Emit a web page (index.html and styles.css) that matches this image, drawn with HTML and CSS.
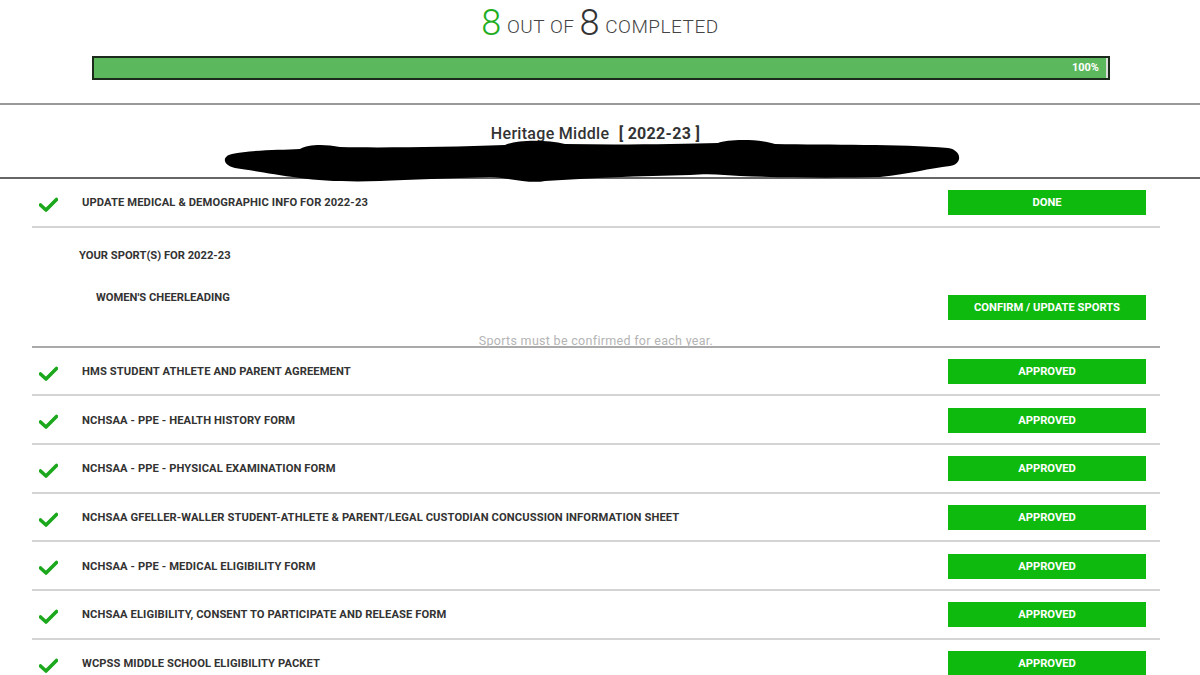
FILE: index.html
```html
<!DOCTYPE html>
<html>
<head>
    <meta charset="UTF-8">
    <title>Athlete Registration</title>
    <link rel="stylesheet" href="styles.css">
</head>
<body>
    <!-- summary header -->
    <div class="summary">
        <div class="count">
            <span class="num done">8</span> OUT OF <span class="num">8</span> COMPLETED
        </div>
        <div class="progress">
            <div class="progress-fill">100%</div>
        </div>
    </div>

    <div class="school">
        <h2 class="school-title">Heritage Middle <b>[ 2022-23 ]</b></h2>
        <svg class="redact" width="740" height="50" viewBox="225 140 740 50">
            <path d="M232 156 C250 152 280 152 300 151 C308 146 325 146 340 149 C380 150 450 149 505 147 C515 142 545 141 565 146 C620 147 680 146 718 145 C728 141 760 141 775 146 C830 147 900 146 948 150 C962 152 963 166 950 168 C930 170 910 176 880 179 C840 180 790 180 740 178 C725 177 710 175 690 177 C640 178 590 180 545 183 C530 186 510 180 490 179 C450 180 410 182 380 183 C350 184 320 183 300 180 C270 176 250 172 235 170 C222 167 222 158 232 156 Z" fill="#000"/>
        </svg>
    </div>

    <div class="tasks">
        <div class="task">
            <span class="check"><svg width="19" height="15" viewBox="0 0 19 15"><path d="M1.5 8 L7 13 L17.5 2.5" fill="none" stroke="#1ca81c" stroke-width="3.6" stroke-linecap="round" stroke-linejoin="round"/></svg></span>
            <span class="task-name">UPDATE MEDICAL &amp; DEMOGRAPHIC INFO FOR 2022-23</span>
            <a class="btn" href="#">DONE</a>
        </div>

        <div class="sports">
            <div class="sports-title">YOUR SPORT(S) FOR 2022-23</div>
            <div class="sports-row">
                <span class="sport">WOMEN'S CHEERLEADING</span>
                <a class="btn" href="#">CONFIRM / UPDATE SPORTS</a>
            </div>
            <div class="sports-note">Sports must be confirmed for each year.</div>
        </div>

        <div class="task">
            <span class="check"><svg width="19" height="15" viewBox="0 0 19 15"><path d="M1.5 8 L7 13 L17.5 2.5" fill="none" stroke="#1ca81c" stroke-width="3.6" stroke-linecap="round" stroke-linejoin="round"/></svg></span>
            <span class="task-name">HMS STUDENT ATHLETE AND PARENT AGREEMENT</span>
            <a class="btn" href="#">APPROVED</a>
        </div>
        <div class="task">
            <span class="check"><svg width="19" height="15" viewBox="0 0 19 15"><path d="M1.5 8 L7 13 L17.5 2.5" fill="none" stroke="#1ca81c" stroke-width="3.6" stroke-linecap="round" stroke-linejoin="round"/></svg></span>
            <span class="task-name">NCHSAA - PPE - HEALTH HISTORY FORM</span>
            <a class="btn" href="#">APPROVED</a>
        </div>
        <div class="task">
            <span class="check"><svg width="19" height="15" viewBox="0 0 19 15"><path d="M1.5 8 L7 13 L17.5 2.5" fill="none" stroke="#1ca81c" stroke-width="3.6" stroke-linecap="round" stroke-linejoin="round"/></svg></span>
            <span class="task-name">NCHSAA - PPE - PHYSICAL EXAMINATION FORM</span>
            <a class="btn" href="#">APPROVED</a>
        </div>
        <div class="task">
            <span class="check"><svg width="19" height="15" viewBox="0 0 19 15"><path d="M1.5 8 L7 13 L17.5 2.5" fill="none" stroke="#1ca81c" stroke-width="3.6" stroke-linecap="round" stroke-linejoin="round"/></svg></span>
            <span class="task-name">NCHSAA GFELLER-WALLER STUDENT-ATHLETE &amp; PARENT/LEGAL CUSTODIAN CONCUSSION INFORMATION SHEET</span>
            <a class="btn" href="#">APPROVED</a>
        </div>
        <div class="task">
            <span class="check"><svg width="19" height="15" viewBox="0 0 19 15"><path d="M1.5 8 L7 13 L17.5 2.5" fill="none" stroke="#1ca81c" stroke-width="3.6" stroke-linecap="round" stroke-linejoin="round"/></svg></span>
            <span class="task-name">NCHSAA - PPE - MEDICAL ELIGIBILITY FORM</span>
            <a class="btn" href="#">APPROVED</a>
        </div>
        <div class="task">
            <span class="check"><svg width="19" height="15" viewBox="0 0 19 15"><path d="M1.5 8 L7 13 L17.5 2.5" fill="none" stroke="#1ca81c" stroke-width="3.6" stroke-linecap="round" stroke-linejoin="round"/></svg></span>
            <span class="task-name">NCHSAA ELIGIBILITY, CONSENT TO PARTICIPATE AND RELEASE FORM</span>
            <a class="btn" href="#">APPROVED</a>
        </div>
        <div class="task">
            <span class="check"><svg width="19" height="15" viewBox="0 0 19 15"><path d="M1.5 8 L7 13 L17.5 2.5" fill="none" stroke="#1ca81c" stroke-width="3.6" stroke-linecap="round" stroke-linejoin="round"/></svg></span>
            <span class="task-name">WCPSS MIDDLE SCHOOL ELIGIBILITY PACKET</span>
            <a class="btn" href="#">APPROVED</a>
        </div>
    </div>
</body>
</html>
```

FILE: styles.css
```css
/* base */
body {
  margin: 0;
  background: #fff;
  color: #333;
  font-family: Roboto, "Liberation Sans", sans-serif;
}

/* summary header */
.summary {
  height: 105px;
  border-bottom: 2px solid #999;
  box-sizing: border-box;
  padding-top: 3px;
}

.count {
  text-align: center;
  font-size: 19px;
  font-weight: 300;
  color: #444;
  line-height: 40px;
  letter-spacing: 0.5px;
}

.num {
  font-size: 36px;
  font-weight: 300;
  color: #333;
  vertical-align: -2px;
}

.num.done {
  color: #1fae1f;
}

.progress {
  margin: 9px 90px 0 92px;
  height: 24px;
  border: 2px solid #1c2a1c;
  box-sizing: border-box;
  background: #e8e8e8;
}

.progress-fill {
  width: 100%;
  height: 100%;
  background: #5cb85c;
  color: #fff;
  font-weight: bold;
  font-size: 11px;
  line-height: 20px;
  text-align: right;
  padding-right: 7px;
  box-sizing: border-box;
  border-right: 2px solid #ddd;
}

/* school block */
.school {
  height: 74px;
  border-bottom: 2px solid #666;
  box-sizing: border-box;
  padding-top: 19px;
}

.school-title {
  margin: 0;
  text-align: center;
  font-size: 16px;
  font-weight: 500;
  letter-spacing: 0.3px;
  line-height: 20px;
  color: #333;
  padding-right: 9px;
}

.school-title b {
  margin-left: 5px;
  font-weight: bold;
}

.redact {
  display: block;
  margin-left: 225px;
  margin-top: -6px;
  overflow: visible;
}

/* task list */
.tasks {
  margin: 0 40px 0 32px;
}

.task {
  display: flex;
  align-items: center;
  height: 48.7px;
  box-sizing: border-box;
  border-bottom: 2px solid #d4d4d4;
  padding-top: 1px;
}

.check {
  width: 50px;
  padding-left: 7px;
  box-sizing: border-box;
  display: flex;
  padding-top: 3px;
}

.task-name {
  flex: 1;
  font-weight: bold;
  font-size: 11.2px;
  color: #333;
  letter-spacing: 0.1px;
}

.btn {
  width: 198px;
  height: 25px;
  margin-right: 14px;
  background: #0fba0f;
  color: #fff;
  text-decoration: none;
  font-weight: bold;
  font-size: 11.2px;
  line-height: 25px;
  text-align: center;
}

/* sports block */
.sports {
  height: 120px;
  box-sizing: border-box;
  border-bottom: 2px solid #aaa;
  padding: 21px 0 0 47px;
}

.sports-title {
  font-weight: bold;
  font-size: 11.2px;
  line-height: 14px;
}

.sports-row {
  display: flex;
  align-items: flex-start;
  margin-top: 28px;
  padding-left: 17px;
}

.sport {
  flex: 1;
  font-weight: bold;
  font-size: 11.2px;
  line-height: 14px;
}

.sports-row .btn {
  margin-top: 4px;
}

.sports-note {
  text-align: center;
  font-size: 12.5px;
  color: #b4b4b4;
  line-height: 14px;
  margin-top: 14px;
  margin-left: -47px;
  letter-spacing: 0.3px;
}
```
